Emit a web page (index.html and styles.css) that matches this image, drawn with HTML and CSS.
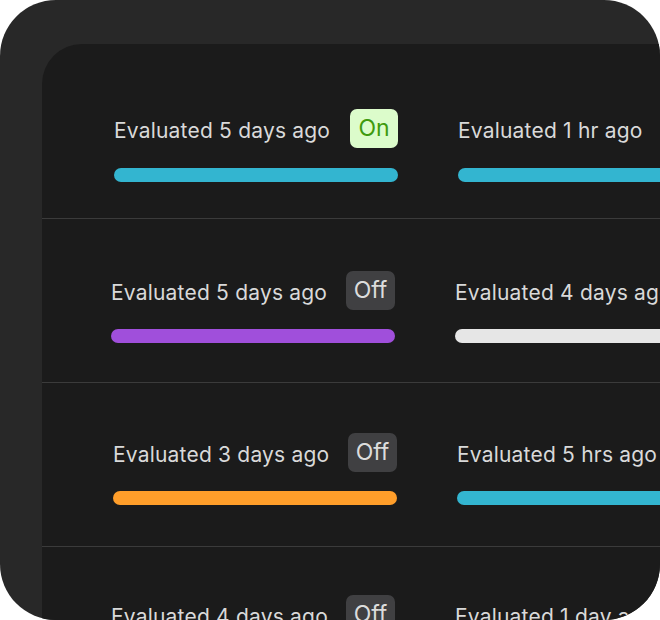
FILE: index.html
```html
<!DOCTYPE html>
<html>
<head>
<meta charset="utf-8">
<link rel="stylesheet" href="styles.css">
</head>
<body>
<div class="frame">
  <div class="panel">
    <div class="row row-1">
      <div class="cell">
        <div class="head"><span class="label">Evaluated 5 days ago</span><span class="badge badge-on">On</span></div>
        <div class="bar bar-cyan"></div>
      </div>
      <div class="cell">
        <div class="head"><span class="label">Evaluated 1 hr ago</span></div>
        <div class="bar bar-cyan"></div>
      </div>
    </div>
    <div class="row row-2">
      <div class="cell">
        <div class="head"><span class="label">Evaluated 5 days ago</span><span class="badge">Off</span></div>
        <div class="bar bar-purple"></div>
      </div>
      <div class="cell">
        <div class="head"><span class="label">Evaluated 4 days ago</span></div>
        <div class="bar bar-white"></div>
      </div>
    </div>
    <div class="row row-3">
      <div class="cell">
        <div class="head"><span class="label">Evaluated 3 days ago</span><span class="badge">Off</span></div>
        <div class="bar bar-orange"></div>
      </div>
      <div class="cell">
        <div class="head"><span class="label">Evaluated 5 hrs ago</span></div>
        <div class="bar bar-cyan"></div>
      </div>
    </div>
    <div class="row row-4">
      <div class="cell">
        <div class="head"><span class="label">Evaluated 4 days ago</span><span class="badge">Off</span></div>
        <div class="bar bar-cyan"></div>
      </div>
      <div class="cell">
        <div class="head"><span class="label">Evaluated 1 day ago</span></div>
        <div class="bar bar-cyan"></div>
      </div>
    </div>
  </div>
</div>
</body>
</html>
```
FILE: styles.css
```css
html, body {
  margin: 0;
  padding: 0;
  background: #ffffff;
}
body {
  font-family: Inter, "Liberation Sans", sans-serif;
}
.frame {
  width: 660px;
  height: 620px;
  border-radius: 56px;
  overflow: hidden;
  background: #282828;
  padding: 44px 0 0 42px;
  box-sizing: border-box;
}
.panel {
  width: 760px;
  height: 700px;
  background: #1b1b1b;
  border-top-left-radius: 40px;
}
.row {
  display: grid;
  grid-template-columns: 284px 284px;
  column-gap: 60px;
  border-bottom: 1px solid #3b3b3b;
}
.row-1 { padding: 64px 0 36px 72px; }
.row-2 { padding: 51px 0 39px 69px; }
.row-3 { padding: 49px 0 41px 71px; }
.row-4 { padding: 47px 0 40px 69px; }
.cell {
  display: flex;
  flex-direction: column;
  gap: 19px;
}
.row-1 .cell { gap: 20px; }
.head {
  display: flex;
  align-items: center;
  justify-content: space-between;
  height: 40px;
  white-space: nowrap;
}
.label {
  font-size: 21px;
  color: #d9d9d9;
  margin-top: 4px;
  letter-spacing: 0.2px;
}
.badge {
  width: 49px;
  height: 39px;
  box-sizing: border-box;
  display: flex;
  align-items: center;
  justify-content: center;
  border-radius: 7px;
  font-size: 23px;
  background: #404042;
  color: #dcdcdc;
}
.badge-on {
  width: 48px;
  background: #dcfccb;
  color: #3f9a0e;
}
.bar {
  height: 14px;
  border-radius: 7px;
  width: 284px;
}
.cell:last-child .bar { width: 320px; }
.bar-cyan { background: #33b5d0; }
.bar-purple { background: #a04fdb; }
.bar-white { background: #e6e6e6; }
.bar-orange { background: #ff9e2a; }
```
